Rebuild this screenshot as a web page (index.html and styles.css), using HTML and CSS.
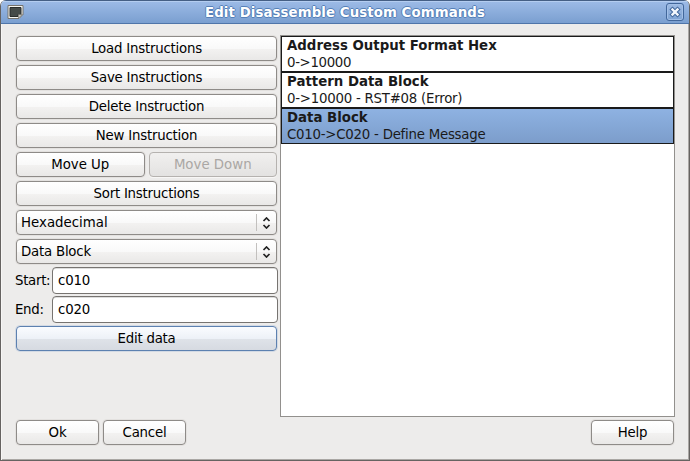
FILE: index.html
```html
<!DOCTYPE html>
<html lang="en">
<head>
<meta charset="utf-8">
<title>Edit Disassemble Custom Commands</title>
<link rel="stylesheet" href="styles.css">
</head>
<body>
<div class="window">
  <header class="titlebar">
    <svg class="app-icon" width="17" height="15" viewBox="0 0 17 15">
      <path d="M1 .5h15v9l-4 4H1z" fill="#f4f4f0" stroke="#77746d"/>
      <path d="M3 2.500h11v7h-3v2H3z" fill="#454b49" stroke="#292d2c"/>
      <path d="M11.500 13v-3.500h4z" fill="#c9c9c2" stroke="#77746d" stroke-width=".7"/>
    </svg>
    <h1 class="title">Edit Disassemble Custom Commands</h1>
    <button class="close" aria-label="Close">
      <svg width="12" height="12" viewBox="0 0 12 12">
        <path d="M3.500 3.500l5 5M8.500 3.500l-5 5" stroke="#41679b" stroke-width="4.400" stroke-linecap="square"/>
        <path d="M3.500 3.500l5 5M8.500 3.500l-5 5" stroke="#f4f8fd" stroke-width="2.400" stroke-linecap="square"/>
      </svg>
    </button>
  </header>
  <main class="content">
    <section class="controls">
      <button class="btn">Load Instructions</button>
      <button class="btn">Save Instructions</button>
      <button class="btn">Delete Instruction</button>
      <button class="btn">New Instruction</button>
      <div class="pair">
        <button class="btn">Move Up</button>
        <button class="btn disabled" disabled>Move Down</button>
      </div>
      <button class="btn">Sort Instructions</button>
      <div class="btn combo wide"><span>Hexadecimal</span><span class="arrows"><svg width="9" height="12" viewBox="0 0 9 12"><path d="M1.500 4l3-3 3 3M1.500 8l3 3 3-3" fill="none" stroke="#222" stroke-width="1.700"/></svg></span></div>
      <div class="btn combo"><span>Data Block</span><span class="arrows"><svg width="9" height="12" viewBox="0 0 9 12"><path d="M1.500 4l3-3 3 3M1.500 8l3 3 3-3" fill="none" stroke="#222" stroke-width="1.700"/></svg></span></div>
      <div class="field"><span>Start:</span><div class="entry">c010</div></div>
      <div class="field"><span>End:</span><div class="entry">c020</div></div>
      <button class="btn focused">Edit data</button>
    </section>
    <section class="list">
      <div class="item"><strong>Address Output Format Hex</strong><span class="range">0-&gt;10000</span></div>
      <div class="item"><strong>Pattern Data Block</strong><span>0-&gt;10000 - RST#08 (Error)</span></div>
      <div class="item selected"><strong>Data Block</strong><span>C010-&gt;C020 - Define Message</span></div>
    </section>
  </main>
  <footer class="actions">
    <button class="btn">Ok</button>
    <button class="btn">Cancel</button>
    <button class="btn help">Help</button>
  </footer>
</div>
</body>
</html>
```
FILE: styles.css
```css
* { box-sizing: border-box; }
body {
  margin: 0;
  background: #fff;
  font: 13.333px/16px "DejaVu Sans", sans-serif;
  color: #000;
}
.window {
  width: 690px;
  height: 461px;
  display: flex;
  flex-direction: column;
  background: #edeceb;
  border: 1px solid #666361;
  border-top: 0;
  border-radius: 6px 6px 0 0;
  box-shadow: inset 1px 0 #f7f6f5, inset -1px -1px #aaa7a4;
  overflow: hidden;
}
.titlebar {
  flex: none;
  height: 24px;
  display: flex;
  align-items: center;
  padding: 0 5px 0 6px;
  background: linear-gradient(#9dbbe7, #7a9fd0);
  border-top: 1px solid #455f85;
  border-bottom: 1px solid #4f75a9;
  box-shadow: inset 0 1px #b4cdf0;
}
.app-icon { flex: none; }
.title {
  flex: 1;
  margin: 0;
  padding-top: 2px;
  text-align: center;
  font-size: 13.333px;
  line-height: 20px;
  letter-spacing: .08px;
  color: #fff;
  text-shadow: 1px 0 #5580b8, -1px 0 #5580b8, 0 1px #5580b8, 0 -1px #5580b8;
}
.close {
  width: 18px;
  height: 18px;
  flex: none;
  display: grid;
  place-items: center;
  padding: 0;
  border: 1px solid #42679b;
  border-radius: 3px;
  background: linear-gradient(#9dbae3, #7fa3d3);
  box-shadow: inset 0 0 0 1px #a3c0e7;
}
.content {
  display: flex;
  gap: 3px;
  padding: 11px 14px 0 15px;
}
.controls {
  width: 261px;
  display: flex;
  flex-direction: column;
  gap: 4px;
  padding-top: 1px;
}
.btn {
  height: 25px;
  padding: 0 4px;
  border: 1px solid #8e8b88;
  border-radius: 4px;
  background: linear-gradient(#fff, #f9f9f9 50%, #f3f2f1 51%, #e9e8e7);
  box-shadow: 0 0 0 1px #e3e1df;
  font: inherit;
  letter-spacing: -.22px;
  color: #000;
}
.pair { display: flex; gap: 4px; }
.pair .btn { flex: 1; letter-spacing: 0; }
.pair .disabled {
  border-color: #b5b2af;
  color: #aaa7a4;
  background: linear-gradient(#f1f0ef, #e3e2e1);
  box-shadow: 0 1px #f8f7f6;
}
.combo {
  display: flex;
  align-items: center;
  justify-content: space-between;
}
.wide { letter-spacing: 0; }
.arrows {
  display: flex;
  width: 15px;
  height: 17px;
  align-items: center;
  justify-content: flex-end;
  border-left: 1px solid #c2c0be;
}
.combo .arrows { margin-right: 1px; }
.field {
  display: flex;
  align-items: center;
  height: 25px;
  margin: 0 -1px;
}
.field span { width: 37px; flex: none; letter-spacing: -.3px; }
.entry {
  flex: 1;
  height: 27px;
  padding: 5px 5px 0;
  border: 1px solid #777471;
  border-radius: 4px;
  background: #fff;
  box-shadow: inset 0 1px #ddd;
  letter-spacing: -.15px;
}
.focused {
  border-color: #5d81b0;
  background: linear-gradient(#fafcff, #edf1f7 50%, #dfe3e9 51%, #d6dae1);
  box-shadow: 0 0 0 1px #d3dae4;
}
.list {
  flex: 1;
  height: 382px;
  border: 1px solid #92908d;
  background: #fff;
  color: #1a1a1a;
}
.item {
  height: 36px;
  padding: 1px 5px 0;
  border: 1px solid #1a1a1a;
}
.item strong, .item span { display: block; line-height: 17px; }
.item strong { line-height: 16px; }
.item span { letter-spacing: -.24px; }
.item .range { letter-spacing: -.35px; }
.selected { background: linear-gradient(#8eb2e2, #7c9dcb); }
.actions {
  display: flex;
  gap: 4px;
  padding: 3px 15px 0;
}
.actions .btn { width: 83px; }
.help { margin-left: auto; }
```
